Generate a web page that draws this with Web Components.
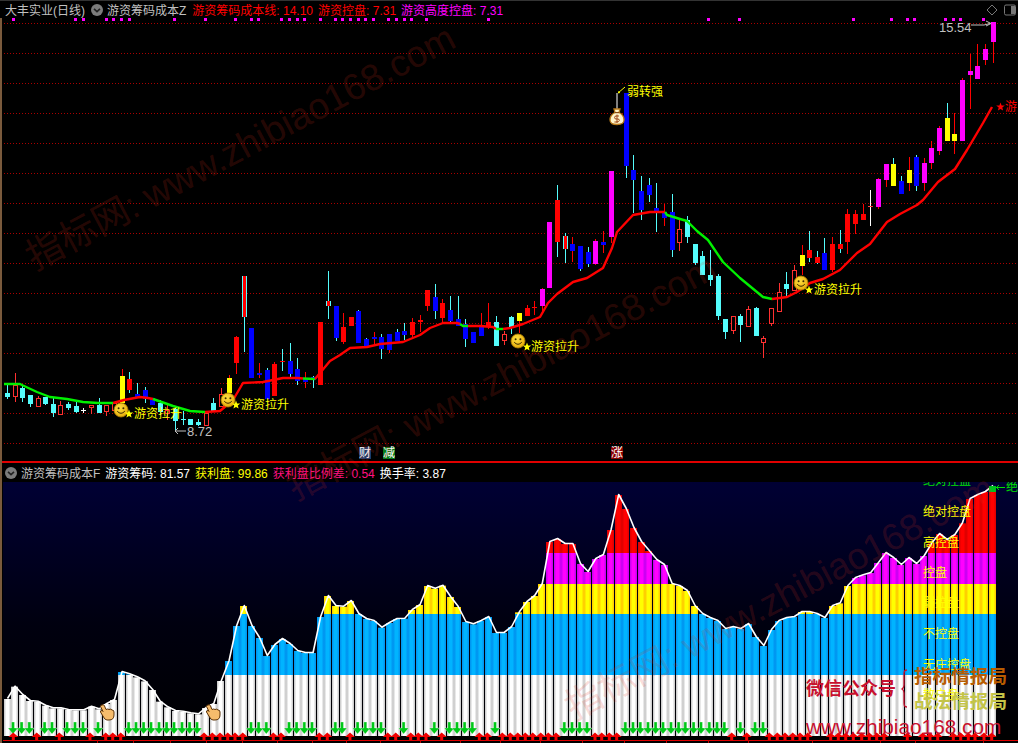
<!DOCTYPE html>
<html lang="zh">
<head>
<meta charset="utf-8">
<title>大丰实业</title>
<style>
html,body{margin:0;padding:0;background:#000;overflow:hidden}
</style>
</head>
<body>
<tdx-terminal>
  <chart-pane offset="18" kind="main">
    <pane-header slot="header">
      <pane-title style="margin-left:5px">大丰实业(日线)</pane-title>
      <menu-dot style="margin-left:6px"></menu-dot>
      <pane-title style="margin-left:4px">游资筹码成本Z</pane-title>
      <legend-item style="margin-left:6px" color="#ff0000" label="游资筹码成本线" value="14.10"></legend-item>
      <legend-item style="margin-left:5px" color="#ff0000" label="游资控盘" value="7.31"></legend-item>
      <legend-item style="margin-left:5px" color="#ff00ff" label="游资高度控盘" value="7.31"></legend-item>
      <window-tools></window-tools>
    </pane-header>
    <candle-chart></candle-chart>
    <chart-label x="627" y="92" color="#ffff00">弱转强</chart-label>
    <chart-label x="134" y="414" color="#ffff00">游资拉升</chart-label>
    <chart-label x="241" y="405" color="#ffff00">游资拉升</chart-label>
    <chart-label x="531" y="347" color="#ffff00">游资拉升</chart-label>
    <chart-label x="814" y="290" color="#ffff00">游资拉升</chart-label>
    <chart-label x="187" y="431" color="#c0c0c0" size="13">8.72</chart-label>
    <chart-label x="939" y="27" color="#c0c0c0" size="13">15.54</chart-label>
    <chart-label x="1005" y="107" color="#ff0000">游</chart-label>
    <chart-label x="359" y="453" bg="#1a3c6c" color="#ffffff">财</chart-label>
    <chart-label x="383" y="453" bg="#0a7a1a" color="#ffffff">减</chart-label>
    <chart-label x="611" y="453" bg="#8a0000" color="#ffffff">涨</chart-label>
  </chart-pane>
  <chart-pane offset="482" kind="sub">
    <pane-header slot="header">
      <menu-dot style="margin-left:5px"></menu-dot>
      <pane-title style="margin-left:4px">游资筹码成本F</pane-title>
      <legend-item style="margin-left:5px" color="#ffffff" label="游资筹码" value="81.57"></legend-item>
      <legend-item style="margin-left:5px" color="#ffff00" label="获利盘" value="99.86"></legend-item>
      <legend-item style="margin-left:5px" color="#ff1080" label="获利盘比例差" value="0.54"></legend-item>
      <legend-item style="margin-left:5px" color="#ffffff" label="换手率" value="3.87"></legend-item>
    </pane-header>
    <control-chart></control-chart>
    <chart-label x="923" y="481" color="#00e000">绝对控盘</chart-label>
    <chart-label x="1006" y="487" color="#00e000">绝</chart-label>
    <chart-label x="923" y="512" color="#ffff00">绝对控盘</chart-label>
    <chart-label x="923" y="543" color="#ffff00">高控盘</chart-label>
    <chart-label x="923" y="573" color="#ffff00">控盘</chart-label>
    <chart-label x="923" y="603" color="#ffff00">弱控盘</chart-label>
    <chart-label x="923" y="634" color="#ffff00">不控盘</chart-label>
    <chart-label x="923" y="665" color="#ffff00">无庄控盘</chart-label>
    <chart-label x="923" y="695" color="#ffff00">散户盘</chart-label>
    <chart-label x="806" y="689" color="#c8102e" size="18" weight="700">微信公众号</chart-label>
    <chart-label x="914" y="677" color="#b85c00" size="18.6" weight="700">指标情报局</chart-label>
    <chart-label x="914" y="702" color="#c4c448" size="18.6" weight="700">战法情报局</chart-label>
    <chart-label x="806" y="727" color="#c8102e" size="20.8">www.zhibiao168.com</chart-label>
  </chart-pane>
  <water-mark x="29" y="260">指标网: www.zhibiao168.com</water-mark>
  <water-mark x="290" y="490">指标网: www.zhibiao168.com</water-mark>
  <water-mark x="568" y="710">指标网: www.zhibiao168.com</water-mark>
</tdx-terminal>

<script>
const FONT = '"Liberation Sans","Noto Sans CJK SC",sans-serif';
const cx = i => Math.round(7 + 7.64 * i);

class TdxTerminal extends HTMLElement {
  constructor(){ super(); this.attachShadow({mode:'open'}).innerHTML =
    `<style>:host{display:flex;flex-direction:column;position:relative;width:1018px;height:743px;background:#000;overflow:hidden;font:12px ${FONT};border-left:0}
     :host::before{content:"";position:absolute;left:0;top:18px;bottom:0;width:2px;background:#7a5a3c;z-index:3}</style><slot></slot>`; }
}
class ChartPane extends HTMLElement {
  constructor(){ super();
    const sub = this.getAttribute('kind') === 'sub';
    this.attachShadow({mode:'open'}).innerHTML =
    `<style>
      :host{display:flex;flex-direction:column;${sub?'height:282px;border-top:2px solid #e00000;':'height:461px;border-top:1px solid #333;'}box-sizing:border-box}
      .head{flex:none;height:${sub?19:17}px}
      .canvas{flex:1;position:relative;overflow:hidden;min-height:0}
    </style><div class="head"><slot name="header"></slot></div><div class="canvas"><slot></slot></div>`; }
}
class PaneHeader extends HTMLElement {
  constructor(){ super(); this.attachShadow({mode:'open'}).innerHTML =
    `<style>:host{display:flex;align-items:center;height:100%;white-space:nowrap;position:relative;z-index:2}</style><slot></slot>`; }
}
class PaneTitle extends HTMLElement {
  constructor(){ super(); this.attachShadow({mode:'open'}).innerHTML =
    `<style>:host{display:block;color:#c0c0c0;font-size:12px}</style><slot></slot>`; }
}
class MenuDot extends HTMLElement {
  constructor(){ super(); this.attachShadow({mode:'open'}).innerHTML =
    `<style>:host{display:block;width:12px;height:12px}svg{display:block}</style>
     <svg width="12" height="12" viewBox="0 0 12 12"><circle cx="6" cy="6" r="6" fill="#7c7c7c"/><path d="M3 4.8 6 7.6 9 4.8" fill="none" stroke="#222" stroke-width="1.6"/></svg>`; }
}
class LegendItem extends HTMLElement {
  constructor(){ super();
    const c=this.getAttribute('color'),l=this.getAttribute('label'),v=this.getAttribute('value');
    this.attachShadow({mode:'open'}).innerHTML =
    `<style>:host{display:block;color:${c};font-size:12px}</style>${l}: ${v}`; }
}
class WindowTools extends HTMLElement {
  constructor(){ super(); this.attachShadow({mode:'open'}).innerHTML =
    `<style>:host{display:flex;align-items:center;gap:6px;margin-left:auto;margin-right:2px}svg{display:block}</style>
     <svg width="12" height="12" viewBox="0 0 12 12"><path d="M6 1 11 6 6 11 1 6Z" fill="none" stroke="#777"/></svg>
     <svg width="12" height="12" viewBox="0 0 12 12"><rect x=".5" y="1" width="11" height="10" rx="1.5" fill="none" stroke="#777"/><rect x="7" y="2" width="4" height="8" fill="#777"/></svg>`; }
}
class ChartLabel extends HTMLElement {
  constructor(){ super(); this.attachShadow({mode:'open'}).innerHTML =
    `<style>:host{position:absolute;display:block;white-space:nowrap;line-height:1;transform:translateY(-50%)}</style><slot></slot>`; }
  connectedCallback(){
    const off = +this.closest('chart-pane').getAttribute('offset');
    this.style.left = this.getAttribute('x') + 'px';
    this.style.top = (+this.getAttribute('y') - off) + 'px';
    this.style.color = this.getAttribute('color');
    this.style.fontSize = (this.getAttribute('size') || 12) + 'px';
    if (this.getAttribute('weight')) this.style.fontWeight = this.getAttribute('weight');
    if (this.getAttribute('bg')) { this.style.background = this.getAttribute('bg'); this.style.lineHeight = '12px'; }
  }
}
class WaterMark extends HTMLElement {
  constructor(){ super(); this.attachShadow({mode:'open'}).innerHTML =
    `<style>:host{position:absolute;display:block;white-space:nowrap;line-height:1;font-size:37px;color:rgba(225,50,30,.18);transform-origin:0 50%;transform:translateY(-50%) rotate(-28deg);pointer-events:none;z-index:5}</style><slot></slot>`; }
  connectedCallback(){ this.style.left=this.getAttribute('x')+'px'; this.style.top=this.getAttribute('y')+'px'; }
}

/* i,type,top,bottom,wickTop,wickBottom,wickColour */
const CANDLES = [
[0,'c',393,397,385,399],[1,'h',385,396,373,402],[2,'c',388,398,386,402],[3,'c',395,404,395,407],[4,'h',398,406,396,407],
[5,'c',397,404,397,405],[6,'c',404,413,397,417],[7,'h',405,414,401,415],[8,'c',404,408,402,410],[9,'c',406,412,402,413],
[10,'w',410,411,408,413],[11,'h',405,407,405,414],[12,'c',405,413,398,413],[13,'h',405,411,405,416],[14,'h',403,410,403,412],
[15,'y',376,403,369,403,'r'],[16,'r',379,390,372,393,'c'],[17,'b',394,397,383,398,'c'],[18,'b',390,399,387,403,'c'],[19,'b',398,405,398,405],
[20,'c',403,412,400,415],[21,'h',410,413,405,420],[22,'c',409,421,407,431],[23,'c',419,420,411,425],[24,'c',419,425,419,425],
[25,'c',422,425,419,426],[26,'h',413,425,413,425],[27,'c',403,411,398,412],[28,'h',394,406,388,407],[29,'y',378,393,375,393,'r'],
[30,'r',337,363,336,374],[31,'x',276,317,276,352,'c'],[32,'b',328,378,328,378],[33,'b',373,375,363,378,'r'],[34,'b',370,399,368,399,'c'],
[35,'r',364,396,362,396],[36,'r',361,362,349,371,'c'],[37,'b',361,374,343,377,'c'],[38,'b',369,381,358,385,'c'],[39,'b',378,382,372,388,'r'],
[40,'b',377,380,376,388,'c'],[41,'r',322,385,322,385],[42,'x',301,306,271,319,'c'],[43,'b',306,338,306,341,'c'],[44,'r',327,342,313,344],
[45,'r',317,326,317,326],[46,'b',311,343,310,343,'c'],[47,'b',339,347,338,347,'c'],[48,'b',337,339,332,345,'r'],[49,'b',337,349,334,359,'c'],
[50,'b',334,350,334,353,'r'],[51,'b',332,341,329,341,'c'],[52,'b',331,335,323,340,'c'],[53,'r',322,335,318,337],[54,'r',320,322,315,332],
[55,'r',290,306,290,311],[56,'b',297,311,284,319,'c'],[57,'r',303,318,299,324],[58,'b',310,321,296,323,'c'],[59,'b',319,326,296,326,'c'],
[60,'b',324,339,319,347,'c'],[61,'b',332,343,332,343],[62,'b',325,336,313,336,'r'],[63,'r',322,327,303,329],[64,'c',322,346,316,346],
[65,'h',334,340,331,345],[66,'c',317,328,316,334],[67,'y',313,321,313,333,'r'],[68,'r',308,316,305,316],[69,'r',307,308,301,315],
[70,'m',289,306,288,312,'r'],[71,'m',222,288,222,288],[72,'r',200,242,185,257,'c'],[73,'x',236,249,233,263,'c'],[74,'b',244,251,237,262,'r'],
[75,'b',246,269,246,271,'c'],[76,'b',252,264,247,267,'c'],[77,'m',241,264,239,265,'r'],[78,'b',242,245,231,253,'r'],[79,'m',171,237,171,243,'r'],
[81,'b',93,166,93,178,'c'],[82,'b',170,180,155,213,'c'],[83,'b',191,210,176,220,'c'],[84,'b',185,195,178,202,'c'],[85,'b',208,212,183,232,'c'],
[86,'b',212,218,204,226,'r'],[87,'b',212,250,194,257,'c'],[88,'h',229,242,220,251],[89,'c',220,237,216,243],[90,'c',244,263,244,265],
[91,'c',256,275,251,275],[92,'c',275,280,250,286],[93,'c',276,316,274,320],[94,'c',319,332,319,339],[95,'h',316,330,316,334],
[96,'c',316,325,314,342],[97,'h',309,326,306,327],[98,'c',308,336,307,336],[99,'h',338,342,336,358],[100,'h',308,323,308,326],
[101,'h',292,311,283,311],[102,'c',284,289,272,296],[103,'h',270,290,265,290],[104,'y',255,266,245,275,'r'],[105,'r',250,258,231,262,'c'],
[106,'r',257,263,251,264,'c'],[107,'b',253,270,238,270,'c'],[108,'r',244,270,237,272],[109,'r',244,249,230,253,'c'],[110,'r',214,242,209,254],
[111,'r',214,224,210,234],[112,'r',214,220,204,220],[113,'w',206,207,190,226],[114,'m',179,207,178,209,'r'],[115,'m',164,180,164,187,'r'],
[116,'y',164,186,158,186,'c'],[117,'b',181,194,176,194,'c'],[118,'y',170,183,157,191,'r'],[119,'b',157,186,155,191,'c'],[120,'m',163,183,158,191,'r'],
[121,'m',148,163,141,169,'r'],[122,'m',128,151,126,155,'r'],[123,'y',118,141,103,141,'c'],[124,'y',134,141,113,154,'r'],[125,'m',80,141,78,141,'r'],
[126,'m',71,75,54,109,'r'],[127,'m',66,79,44,79,'r'],[128,'m',49,60,44,65,'r'],[129,'m',22,42,22,63,'r']
];
const COL = {c:'#54fcfc',r:'#ff0000',b:'#0000ff',y:'#ffff00',m:'#ff00ff',w:'#ffffff',h:'#ff3030'};
const LINE = [
['g',[[4,384],[20,384],[23,385.5],[37,392],[50,397],[67,399],[83,402],[98,403],[113,403]]],
['r',[[113,403],[124,400],[140,397],[148,398],[153,399]]],
['g',[[153,399],[173,406],[190,411],[205,412]]],
['r',[[205,412],[220,411],[233,400],[243,383],[263,382],[283,378],[297,378],[303,378.5]]],
['g',[[303,378.5],[315,379]]],
['r',[[315,379],[320,373],[330,361],[340,355],[350,348],[367,347],[380,344],[403,342],[420,335],[430,328],[443,323],[457,323],[460,324]]],
['g',[[460,324],[463,326],[468,326]]],
['r',[[468,326],[473,326],[480,326],[493,327],[496,329]]],
['g',[[496,329],[503,329]]],
['r',[[503,329],[510,328],[523,324],[540,317],[548,303],[557,294],[573,282],[587,278],[603,268],[612,248],[617,232],[633,215],[650,212],[665,212]]],
['g',[[665,212],[667,215],[680,219],[687,221],[697,231],[708,240],[723,262],[740,278],[763,297],[772,299]]],
['r',[[772,299],[787,297],[797,292],[810,283],[823,279],[840,270],[857,253],[870,244],[887,222],[900,214],[917,205],[923,200],[938,182],[955,169],[967,150],[983,123],[992,107]]]
];
const DOTS = [40,224,248,317,338,362,386,521,614,704,752,773,842,866,890,911,959,1004,1025,1049,1073,1094,1118,1163,1187,1211,1232,1277,1463].map(z=>z/3)
  .concat([85,178,520,634,682,703,796,820,841,910].map(z=>680+z/3));

const star = (x,y,r,fill)=>{let p=[];for(let k=0;k<10;k++){const a=-Math.PI/2+k*Math.PI/5,q=k%2?r*.42:r;p.push((x+q*Math.cos(a)).toFixed(1)+','+(y+q*Math.sin(a)).toFixed(1));}return `<polygon points="${p.join(' ')}" fill="${fill}"/>`;};
const smile = (x,y)=>`<g transform="translate(${x} ${y})"><circle r="7" fill="url(#sm)" stroke="#b08000" stroke-width=".8"/><circle cx="-2.4" cy="-1.8" r="1" fill="#3a2a00"/><circle cx="2.4" cy="-1.8" r="1" fill="#3a2a00"/><path d="M-3.8 1.2Q0 5.4 3.8 1.2" fill="none" stroke="#3a2a00" stroke-width="1"/></g>`;

class CandleChart extends HTMLElement {
  constructor(){ super();
    let s='';
    for(let y=23;y<=443;y+=30) s+=`<path d="M4 ${y+.5}H1018" stroke="#aa0000" stroke-dasharray="1 2" fill="none"/>`;
    for(const d of DOTS) s+=`<rect x="${Math.round(d)-1}" y="18" width="3" height="3" fill="#ff00ff"/>`;
    for(const [i,t,a,b,wa,wb,wc] of CANDLES){
      const x=cx(i), w=wc?COL[wc]:(t==='h'?COL.h:COL[t==='x'?'r':t]);
      s+=`<rect x="${x}" y="${wa}" width="1" height="${wb-wa}" fill="${w}"/>`;
      if(t==='h') s+=`<rect x="${x-1.5}" y="${a+.5}" width="4" height="${b-a}" fill="#000" stroke="${COL.h}"/>`;
      else if(t==='x') s+=`<rect x="${x-2}" y="${a}" width="5" height="${b-a}" fill="#54fcfc"/><rect x="${x-1}" y="${a}" width="3" height="${b-a}" fill="#f00"/>`;
      else if(t==='w') s+=`<rect x="${x-2}" y="${a}" width="5" height="1" fill="${i===113?'#f33':'#fff'}"/>`;
      else s+=`<rect x="${x-2}" y="${a}" width="5" height="${b-a}" fill="${COL[t]}"/>`;
    }
    for(const [c,p] of LINE) s+=`<polyline points="${p.map(q=>q.join(',')).join(' ')}" fill="none" stroke="${c==='g'?'#00f000':'#ff0000'}" stroke-width="2.4" stroke-linejoin="round"/>`;
    for(const [x,y] of [[121,410],[228,400],[518,341],[801,283]]) s+=smile(x,y);
    for(const [x,y] of [[129,414],[236,405],[527,347],[809,290]]) s+=star(x,y,4.5,'#ffff00');
    s+=star(1000.5,107,4.5,'#ff0000');
    /* price arrows */
    s+=`<path d="M186 431H175M178 428 175 431 178 434" stroke="#c0c0c0" fill="none"/>`;
    s+=`<path d="M971 25H984L990 23.5M986 21 991 23.5 986 26" stroke="#c0c0c0" fill="none"/>`;
    /* money bag + pointer */
    s+=`<path d="M617 93V109" stroke="#fff"/><path d="M618 93 625 87M620 92.5 618.5 93 619 91" stroke="#ffff00" fill="none"/>`;
    s+=`<g transform="translate(617 117)"><path d="M-3 -8H3L2 -4.5C6 -2.5 7 1 7 3 7 6.5 4 7.5 0 7.5-4 7.5-7 6.5-7 3-7 1-6-2.5-2-4.5Z" fill="#fff4c8" stroke="#b87818" stroke-width="1.3"/><path d="M-2.2 -4.4H2.2" stroke="#8a4a10" stroke-width="1.2"/><path d="M2 -1H-1Q-2.4 -1-2.4 .6-2.4 2 -1 2H.8Q2.4 2 2.4 3.4 2.4 5-1 5H-2.6M0 -2.4V6" fill="none" stroke="#a04818" stroke-width="1"/></g>`;
    this.attachShadow({mode:'open'}).innerHTML =
     `<style>:host{display:block;position:absolute;inset:0}svg{display:block}</style>
      <svg width="1018" height="443" viewBox="0 18 1018 443"><defs><radialGradient id="sm" cx=".4" cy=".35" r=".8"><stop offset="0" stop-color="#ffe040"/><stop offset="1" stop-color="#e0a000"/></radialGradient></defs>${s}</svg>`;
  }
}

const TOPS=[657,620,645,663,665,677,685,685,690,691,691,680,688,672,660,576,583,592,604,630,665,682,693,695,700,703,684,672,603,543,438,378,438,474,528,495,477,492,513,519,519,411,348,378,
380,363,402,417,423,443,429,417,416,390,375,318,326,317,351,381,426,433,423,411,459,459,441,397,366,348,312,186,177,192,192,252,276,237,225,150,45,87,144,186,213,240,255,312,318,
333,378,402,414,423,447,441,447,432,471,498,450,423,414,411,396,396,402,414,378,370,318,294,286,279,249,219,234,255,234,252,228,190,162,180,165,130,57,45,36,18];
const Z=z=>480+z/3;
const UP=[40,110,178,270,317,338,362,612,637,660,683,705,728,820,843,958,982].map(z=>z/3)
 .concat([30,143,167,212,235,258,305,418,442,487,511,533,556,578,602,625,648,765,785,808,830].map(z=>340+z/3))
 .concat([155,200,268,292,315,338,360,383,452,475,497,520,545,568,590,612,682,728,750,773,820,842,865,885,912,935].map(z=>680+z/3));
const DOWN=[38,64,87,133,155,200,224,248,293,385,407,430,452,476,499,521,545,568,590,752,775,798,866,889,912,935,1005].map(z=>z/3)
 .concat([5,52,75,98,122,190,282,327,350,373,396,464,672,695,718,740,855,878,900,923,946,968,992,1015].map(z=>340+z/3))
 .concat([15,40,62,87,110,132,180,224,248].map(z=>680+z/3));
const TICKS=[292,400,511,619,727,832,935].map(z=>z/3).concat([19,121,241,361,481,601,727,853,979].map(z=>340+z/3)).concat([85,205,397,601,706,910].map(z=>680+z/3));

class ControlChart extends HTMLElement {
  constructor(){ super();
    const bands=[[736,675,'wh'],[675,614,'bl'],[614,584,'ye'],[584,553,'ma'],[553,0,'re']];
    let s='';
    TOPS.forEach((z,i)=>{
      const top=Z(z), x=Math.floor(4+7.64*i);
      for(const [lo,hi,g] of bands){
        const a=Math.max(top,hi); if(a>=lo) continue;
        s+=`<rect x="${x}" y="${a}" width="7" height="${lo-a}" fill="url(#${g})"/>`;
      }
    });
    const pts=TOPS.map((z,i)=>(7.5+7.64*i).toFixed(1)+','+(Z(z)-.5).toFixed(1)).join(' ');
    s+=`<polyline points="${pts}" fill="none" stroke="#fff" stroke-width="1.6" stroke-linejoin="round"/>`;
    s+=`<rect x="989" y="486" width="7" height="6" fill="#00c020"/>`;
    s+=`<path d="M996 487.5H1005M999 485 996.5 487.5 999 490" stroke="#00e000" fill="none"/>`;
    s+=`<rect x="3" y="736" width="1015" height="7" fill="#000"/>`;
    for(const x of DOWN) s+=`<path d="M${(x-1.2).toFixed(1)} 722h3v6h3.5l-5 6-5-6h3.5z" fill="#00c818" stroke="#fff" stroke-width=".3"/>`;
    for(const x of UP) s+=`<path d="M${(x-5).toFixed(1)} 737l5-4.5 5 4.5h-3.5v3.5h-3v-3.5z" fill="#f00000"/>`;
    s+=`<rect x="3" y="740" width="1015" height="1" fill="#e00000"/>`;
    for(const x of TICKS) s+=`<rect x="${Math.round(x)}" y="740" width="1" height="3" fill="#c00000"/>`;
    /* hands */
    for(const [x,y] of [[107,712],[213,712]])
      s+=`<path transform="translate(${x} ${y})" d="M-5 -7Q-3 -8-2.5 -6L-1 -2.5Q1 -3.5 2 -2.5 4 -3.5 5 -2 7 -2 7 0V3Q7 8 2 8H0Q-2 8-3.5 5L-6.5 0Q-7 -1.5-5 -1.5L-4 -.5-6.5 -5.5Q-6.5 -7-5 -7Z" fill="#f6bc6c" stroke="#5a3208" stroke-width="1"/>`;
    /* brace */
    s+=`<path d="M907 670C904 670 904 672 904 675V685C904 688 903 688.5 902 689 903 689.5 904 690 904 693V702C904 705 904 707 907 707" fill="none" stroke="#c8102e" stroke-width="1.3"/>`;
    this.attachShadow({mode:'open'}).innerHTML =
     `<style>:host{display:block;position:absolute;inset:0}svg{display:block}</style>
      <svg width="1018" height="261" viewBox="0 482 1018 261"><defs>
      <linearGradient id="bg" x1="0" y1="0" x2="0" y2="1"><stop offset="0" stop-color="#000034"/><stop offset=".55" stop-color="#00000f"/><stop offset="1" stop-color="#000"/></linearGradient>
      ${[['wh','#c4c4c4','#ffffff'],['bl','#0090ee','#00b4ff'],['ye','#ffc400','#ffff00'],['ma','#c000f0','#ff00ff'],['re','#d80000','#ff0000']].map(([id,e,c])=>`<linearGradient id="${id}"><stop offset="0" stop-color="${e}"/><stop offset=".35" stop-color="${c}"/><stop offset=".65" stop-color="${c}"/><stop offset="1" stop-color="${e}"/></linearGradient>`).join('')}
      </defs><rect x="3" y="482" width="1015" height="261" fill="url(#bg)"/>${s}</svg>`;
  }
}

customElements.define('tdx-terminal',TdxTerminal);
customElements.define('chart-pane',ChartPane);
customElements.define('pane-header',PaneHeader);
customElements.define('pane-title',PaneTitle);
customElements.define('menu-dot',MenuDot);
customElements.define('legend-item',LegendItem);
customElements.define('window-tools',WindowTools);
customElements.define('chart-label',ChartLabel);
customElements.define('water-mark',WaterMark);
customElements.define('candle-chart',CandleChart);
customElements.define('control-chart',ControlChart);
</script>
</body>
</html>
